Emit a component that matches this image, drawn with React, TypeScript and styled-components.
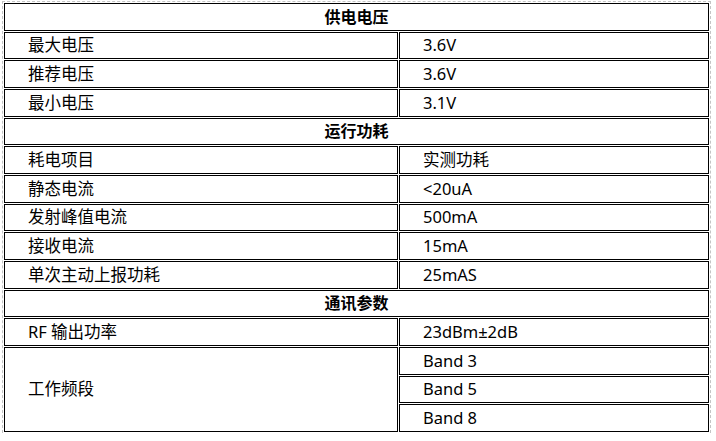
import React from "react";
import styled, { createGlobalStyle } from "styled-components";

const Global = createGlobalStyle`
  html, body { margin: 0; padding: 0; background: #fff; }
  body { font-family: "Noto Sans", "Noto Sans CJK SC", sans-serif; color: #000; }
`;

const Table = styled.table`
  margin: 1px 0 0 2px;
  width: 709px;
  border: 1px dashed #c4c4c4;
  border-bottom: none;
  border-spacing: 1px;
  border-collapse: separate;
  table-layout: fixed;
`;

const Cell = styled.td<{ $head?: boolean }>`
  box-sizing: border-box;
  height: 27.67px;
  border: 1px solid #000;
  padding: 0 0 0 23px;
  font-size: 16.5px;
  line-height: 20px;
  vertical-align: middle;
  white-space: nowrap;
  ${(p) =>
    p.$head &&
    `
    text-align: center;
    font-weight: 700;
    padding: 0;
    font-size: 16px;
  `}
`;

type Row = [string, string];

const sections: { title: string; rows: Row[] }[] = [
  {
    title: "供电电压",
    rows: [
      ["最大电压", "3.6V"],
      ["推荐电压", "3.6V"],
      ["最小电压", "3.1V"],
    ],
  },
  {
    title: "运行功耗",
    rows: [
      ["耗电项目", "实测功耗"],
      ["静态电流", "<20uA"],
      ["发射峰值电流", "500mA"],
      ["接收电流", "15mA"],
      ["单次主动上报功耗", "25mAS"],
    ],
  },
];

export default function App() {
  return (
    <>
      <Global />
      <Table>
        <colgroup>
          <col style={{ width: 394 }} />
          <col />
        </colgroup>
        <tbody>
          {sections.map((s) => (
            <React.Fragment key={s.title}>
              <tr>
                <Cell $head colSpan={2}>
                  {s.title}
                </Cell>
              </tr>
              {s.rows.map(([a, b]) => (
                <tr key={a}>
                  <Cell>{a}</Cell>
                  <Cell>{b}</Cell>
                </tr>
              ))}
            </React.Fragment>
          ))}
          <tr>
            <Cell $head colSpan={2}>
              通讯参数
            </Cell>
          </tr>
          <tr>
            <Cell>RF 输出功率</Cell>
            <Cell>23dBm±2dB</Cell>
          </tr>
          <tr>
            <Cell rowSpan={3}>工作频段</Cell>
            <Cell>Band 3</Cell>
          </tr>
          <tr>
            <Cell>Band 5</Cell>
          </tr>
          <tr>
            <Cell>Band 8</Cell>
          </tr>
        </tbody>
      </Table>
    </>
  );
}
